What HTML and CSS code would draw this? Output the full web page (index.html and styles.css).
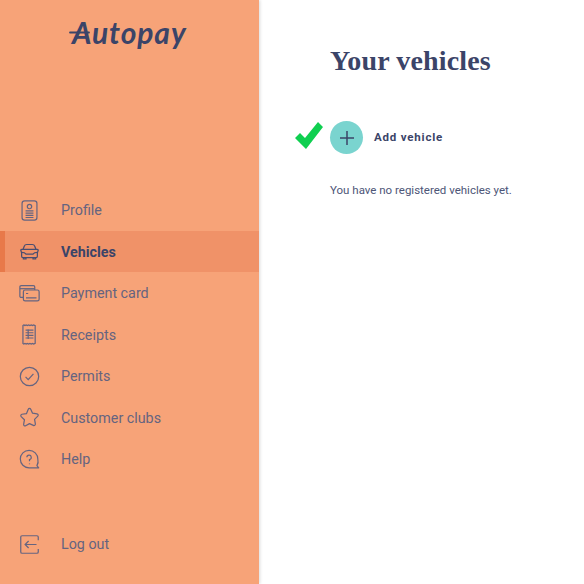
FILE: index.html
```html
<!DOCTYPE html>
<html lang="en">
<head>
  <meta charset="UTF-8">
  <meta name="viewport" content="width=device-width, initial-scale=1.0">
  <title>Your vehicles</title>
  <link rel="stylesheet" href="styles.css">
</head>
<body>
  <div class="layout">
    <aside class="sidebar">
      <div class="logo">
        <svg class="logo-swoosh" width="24" height="12" viewBox="0 0 24 12" fill="none" stroke="#3b4468" stroke-linecap="round">
          <path d="M1 3.500H20" stroke-width="1.800"/>
          <path d="M6 9.500h1.200" stroke-width="2"/>
        </svg>
        <span class="logo-text">Autopay</span>
      </div>

      <nav class="nav">
        <a class="nav-item">
          <svg class="nav-icon" viewBox="0 0 24 24" fill="none">
            <rect x="3.500" y="1" width="17" height="22" rx="3"/>
            <circle cx="12" cy="7.500" r="2.500"/>
            <path d="M7.500 12.500h9M7.500 15h9M7.500 17.500h9M7.500 20h9"/>
          </svg>
          <span>Profile</span>
        </a>
        <a class="nav-item active">
          <svg class="nav-icon" viewBox="0 0 24 24" fill="none">
            <path d="M4.500 10l1.500-4a3 3 0 0 1 2.800-2h6.400a3 3 0 0 1 2.800 2l1.500 4"/>
            <path d="M2 10.500c0-.8.700-1 1.500-1h17c.8 0 1.500.2 1.500 1l-1 3v4a1.500 1.500 0 0 1-1.500 1.500h-15A1.500 1.500 0 0 1 3 17.500v-4z"/>
            <path d="M3 13c2 0 4 .5 5 2h8c1-1.500 3-2 5-2M5 19v1.500h3V19M16 19v1.500h3V19"/>
          </svg>
          <span>Vehicles</span>
        </a>
        <a class="nav-item">
          <svg class="nav-icon" viewBox="0 0 24 24" fill="none">
            <path d="M5 16.500H2.500A1.500 1.500 0 0 1 1 15V4.500A1.500 1.500 0 0 1 2.500 3h14A1.500 1.500 0 0 1 18 4.500V8"/>
            <path d="M1 6.500h17"/>
            <rect x="5" y="8" width="18" height="12.500" rx="2"/>
            <path d="M8 12h2.500M8 17h12"/>
          </svg>
          <span>Payment card</span>
        </a>
        <a class="nav-item">
          <svg class="nav-icon" viewBox="0 0 24 24" fill="none">
            <path d="M5.500 1l1.300.8L8.200 1l1.300.8L11 1l1.500.8L14 1l1.400.8L16.800 1l1.700.8v20.400l-1.700.8-1.400-.8L14 23l-1.500-.8L11 23l-1.500-.8L8.200 23l-1.400-.8-1.300.8-1-.8V1.800z"/>
            <path d="M7.500 7h9M7.500 10h9M7.500 13h9M7.500 16h9M10.500 6v11"/>
          </svg>
          <span>Receipts</span>
        </a>
        <a class="nav-item">
          <svg class="nav-icon" viewBox="0 0 24 24" fill="none">
            <circle cx="12" cy="12" r="10.500"/>
            <path d="M7.500 12.500l3 3L16.500 9"/>
          </svg>
          <span>Permits</span>
        </a>
        <a class="nav-item">
          <svg class="nav-icon" viewBox="0 0 24 24" fill="none">
            <path d="M10.600 2.500c.6-1.200 2.200-1.200 2.800 0l2.100 4.600 5.100.7c1.300.2 1.800 1.800.9 2.700l-3.700 3.600.9 5.200c.2 1.300-1.200 2.300-2.300 1.700L12 19l-4.400 2.500c-1.100.6-2.500-.4-2.300-1.700l.9-5.200-3.700-3.600c-.9-.9-.4-2.500.9-2.700l5.100-.7z" stroke-linejoin="round"/>
          </svg>
          <span>Customer clubs</span>
        </a>
        <a class="nav-item">
          <svg class="nav-icon" viewBox="0 0 24 24" fill="none">
            <path d="M21.500 11.500a10 10 0 1 0-10 10h11l-2-2.500a10 10 0 0 0 1-7.500z" stroke-linejoin="round"/>
            <path d="M9 9.500A2.500 2.500 0 1 1 12 12v2M12 16.500v.8"/>
          </svg>
          <span>Help</span>
        </a>
      </nav>

      <a class="nav-item logout">
        <svg class="nav-icon" viewBox="0 0 24 24" fill="none">
          <path d="M22 7V3.500A1.500 1.500 0 0 0 20.500 2h-17A1.500 1.500 0 0 0 2 3.500v17A1.500 1.500 0 0 0 3.500 22h17a1.500 1.500 0 0 0 1.500-1.500V17"/>
          <path d="M20 12H7M11 8l-4 4 4 4"/>
        </svg>
        <span>Log out</span>
      </a>
    </aside>

    <main class="content">
      <h1 class="title">Your vehicles</h1>
      <div class="add-row">
        <svg class="check" width="30" height="30" viewBox="0 0 30 30">
          <path d="M1 17l5-5 5 5L24 1l5 5-17 22z" fill="#0fcf50"/>
        </svg>
        <span class="add-button">
          <svg width="16" height="16" viewBox="0 0 16 16" stroke="#3b4468" stroke-width="1.500">
            <path d="M8 1v14M1 8h14"/>
          </svg>
        </span>
        <span class="add-label">Add vehicle</span>
      </div>
      <p class="empty">You have no registered vehicles yet.</p>
    </main>
  </div>
</body>
</html>
```

FILE: styles.css
```css
* {
  margin: 0;
  padding: 0;
  box-sizing: border-box;
}

body {
  background-color: #fff;
  color: #3b4468;
  font-family: Roboto, sans-serif;
}

.layout {
  display: flex;
  height: 584px;
  overflow: hidden;
}

.sidebar {
  width: 259px;
  flex-shrink: 0;
  display: flex;
  flex-direction: column;
  background-color: #f7a378;
  box-shadow: 1px 0 3px rgba(0, 0, 0, 0.15);
}

.logo {
  position: relative;
  height: 189.400px;
  padding: 14px 0 0 72px;
}

.logo-text {
  font-family: Lato, sans-serif;
  font-size: 30px;
  font-style: italic;
  font-weight: 700;
  letter-spacing: 0.9px;
  color: #3b4468;
}

.logo-swoosh {
  position: absolute;
  left: 69px;
  top: 29px;
}

.nav-item {
  display: flex;
  align-items: center;
  height: 41.500px;
  padding-left: 19px;
  font-size: 14.300px;
  color: #656480;
}

.nav-icon {
  width: 21px;
  height: 21px;
  margin-right: 21px;
  stroke: #656480;
  stroke-width: 1.400;
}

.active {
  background-color: #f09268;
  border-left: 5px solid #e8794a;
  padding-left: 14px;
  font-weight: 700;
  color: #3b4468;
}

.active .nav-icon {
  stroke: #4a4e70;
}

.logout {
  margin-top: auto;
  margin-bottom: 19px;
}

.content {
  flex: 1;
  padding: 44px 0 0 71px;
}

.title {
  font-family: "Liberation Serif", serif;
  font-size: 28px;
  font-weight: 700;
  line-height: 34px;
  letter-spacing: 0.15px;
}

.add-row {
  position: relative;
  display: flex;
  align-items: center;
  margin-top: 43px;
}

.check {
  position: absolute;
  left: -36px;
  top: 0;
}

.add-button {
  display: flex;
  align-items: center;
  justify-content: center;
  width: 33px;
  height: 33px;
  margin-right: 11px;
  border-radius: 50%;
  background-color: #7ad4cf;
}

.add-label {
  padding-bottom: 2px;
  font-size: 11.500px;
  font-weight: 700;
  letter-spacing: 0.8px;
}

.empty {
  margin-top: 29px;
  font-size: 11.500px;
  color: #4d5577;
}
```
